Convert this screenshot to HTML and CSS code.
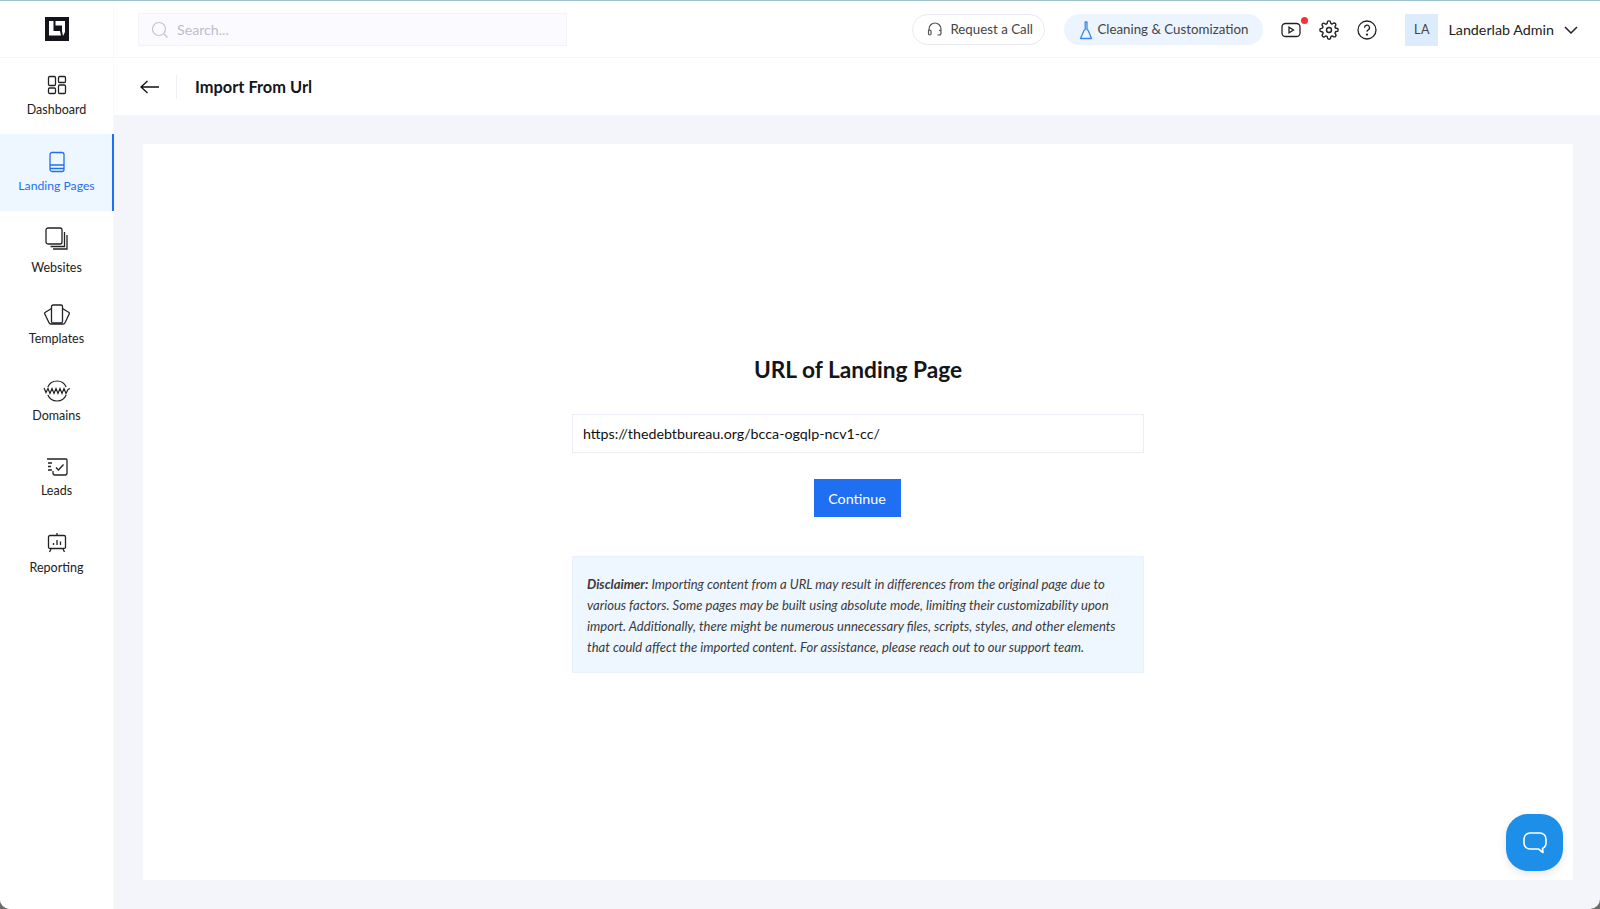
FILE: index.html
```html
<!DOCTYPE html>
<html lang="en">
<head>
    <meta charset="UTF-8">
    <title>Import From Url</title>
    <link rel="stylesheet" href="styles.css">
</head>
<body>
    <div class="app">
        <aside class="sidebar">
            <div class="logo-box">
                <svg width="24" height="24" viewBox="0 0 24 24"><rect width="24" height="24" fill="#14151a"/><path d="M4 4h4.500v10H15l1 4.500H4zM10.500 4H20v11l-2 4-1-5V8.500h-6.500z" fill="#fff"/></svg>
            </div>
            <nav class="nav">
                <a class="nav-item nav-dashboard">
                    <svg width="20" height="20" viewBox="0 0 20 20" fill="none" stroke="#222" stroke-width="1.3"><rect x="1.5" y="1.5" width="7" height="9" rx="1.2"/><rect x="11.5" y="1.5" width="7" height="6" rx="1.2"/><rect x="1.5" y="13" width="7" height="5.5" rx="1.2"/><rect x="11.5" y="10" width="7" height="8.5" rx="1.2"/></svg>
                    <span>Dashboard</span>
                </a>
                <a class="nav-item nav-landing active">
                    <svg width="18" height="22" viewBox="0 0 18 22" fill="none" stroke="#1f6ff2" stroke-width="1.3"><rect x="2" y="1.5" width="14" height="19" rx="2"/><path d="M2 14h14M2 17.5h14"/></svg>
                    <span>Landing Pages</span>
                </a>
                <a class="nav-item nav-websites">
                    <svg width="24" height="24" viewBox="0 0 24 24" fill="none" stroke="#222" stroke-width="1.3"><rect x="1" y="1" width="16" height="16" rx="2"/><path d="M19.5 5v14.500h-14M22 8v14H8"/></svg>
                    <span>Websites</span>
                </a>
                <a class="nav-item nav-templates">
                    <svg width="28" height="22" viewBox="0 0 28 22" fill="none" stroke="#222" stroke-width="1.3" stroke-linejoin="round"><rect x="8.500" y="1" width="11" height="18" rx="1.500"/><path d="M8.500 4.500 2 8.500a1 1 0 0 0-.3 1.300L6 18.800q.6 1.200 1.800 1.200h12.400q1.200 0 1.800-1.200l4.300-9a1 1 0 0 0-.3-1.300l-6.500-4"/></svg>
                    <span>Templates</span>
                </a>
                <a class="nav-item nav-domains">
                    <svg width="28" height="22" viewBox="0 0 28 22" fill="none" stroke="#222" stroke-width="1.2"><path d="M4.830 7a10 10 0 0 1 18.340 0M4.830 15a10 10 0 0 0 18.340 0"/><path d="M1 8l2 4.500 2-4 2 5 2-5 2 5 2-5 2 5 2-5 2 5 2-5 2 5 2-4 2-1"/></svg>
                    <span>Domains</span>
                </a>
                <a class="nav-item nav-leads">
                    <svg width="22" height="18" viewBox="0 0 22 18" fill="none" stroke="#222" stroke-width="1.3"><path d="M1 1h19a1 1 0 0 1 1 1v13a2 2 0 0 1-2 2H9a2 2 0 0 1-2-2v-2"/><path d="M2 5h4M2 8.500h3M2 12h4M10 9.500l2.500 2.500 5-5.500"/></svg>
                    <span>Leads</span>
                </a>
                <a class="nav-item nav-reporting">
                    <svg width="20" height="22" viewBox="0 0 20 22" fill="none" stroke="#222" stroke-width="1.3"><rect x="1.500" y="3.500" width="17" height="13" rx="1.500"/><path d="M10 1v2.500M4 17l-1.500 3M16 17l1.500 3M6.500 13v-2M10 13V8M13.500 13V9.500"/></svg>
                    <span>Reporting</span>
                </a>
            </nav>
        </aside>
        <div class="main">
            <header class="topbar">
                <div class="search">
                    <svg width="18" height="18" viewBox="0 0 18 18" fill="none" stroke="#c3c3d6" stroke-width="1.2"><circle cx="8" cy="8" r="6.500"/><path d="M13 13l3.500 3.500"/></svg>
                    <span>Search...</span>
                </div>
                <div class="top-actions">
                    <a class="pill pill-call">
                        <svg width="16" height="16" viewBox="0 0 16 16" fill="none" stroke="#555" stroke-width="1.200"><path d="M2 9V7a6 6 0 0 1 12 0v2"/><rect x="1.500" y="8" width="2.500" height="5" rx="1.200"/><path d="M12 8.500a1.500 1.500 0 0 1 2 1.500v1a2 2 0 0 1-2 2h-1.500"/></svg>
                        <span>Request a Call</span>
                    </a>
                    <a class="pill pill-clean">
                        <svg width="14" height="20" viewBox="0 0 14 20" fill="none" stroke="#3c86f0" stroke-width="1.300" stroke-linejoin="round"><path d="M6.200 2h1.800v7.500l1.200 1 3.300 8H1.500l3.500-8 1.200-1z"/></svg>
                        <span>Cleaning &amp; Customization</span>
                    </a>
                    <div class="icon-btns">
                        <span class="video-btn">
                            <svg width="20" height="16" viewBox="0 0 20 16" fill="none" stroke="#222" stroke-width="1.300"><rect x="1" y="1.500" width="18" height="13" rx="3.500"/><path d="M8 5.200v5.600l4.500-2.800z"/></svg>
                            <i class="dot"></i>
                        </span>
                        <svg width="20" height="20" viewBox="0 0 24 24" fill="none" stroke="#222" stroke-width="1.700" stroke-linejoin="round"><circle cx="12" cy="12" r="3"/><path d="M19.400 15a1.650 1.650 0 0 0 .33 1.820l.06.06a2 2 0 1 1-2.830 2.830l-.06-.06a1.650 1.650 0 0 0-2.800 1.170V21a2 2 0 1 1-4 0v-.09A1.650 1.650 0 0 0 7.270 19.700l-.06.06a2 2 0 1 1-2.830-2.830l.06-.06a1.650 1.650 0 0 0-1.170-2.800H3a2 2 0 1 1 0-4h.09A1.650 1.650 0 0 0 4.300 7.270l-.06-.06a2 2 0 1 1 2.830-2.830l.06.06a1.650 1.650 0 0 0 2.800-1.170V3a2 2 0 1 1 4 0v.09a1.650 1.650 0 0 0 2.800 1.170l.06-.06a2 2 0 1 1 2.830 2.830l-.06.06a1.650 1.650 0 0 0 1.170 2.800H21a2 2 0 1 1 0 4h-.09a1.650 1.650 0 0 0-1.510 1z"/></svg>
                        <svg width="20" height="20" viewBox="0 0 20 20" fill="none" stroke="#222" stroke-width="1.300"><circle cx="10" cy="10" r="9"/><path d="M7.500 7.700a2.500 2.500 0 1 1 3.700 2.200c-.8.400-1.200 1-1.200 1.800"/><circle cx="10" cy="14.600" r=".5" fill="#222"/></svg>
                    </div>
                    <div class="user">
                        <div class="avatar">LA</div>
                        <span class="user-name">Landerlab Admin</span>
                        <svg width="14" height="8" viewBox="0 0 14 8" fill="none" stroke="#222" stroke-width="1.500"><path d="M1 1l6 6 6-6"/></svg>
                    </div>
                </div>
            </header>
            <div class="titlebar">
                <svg class="back" width="20" height="14" viewBox="0 0 20 14" fill="none" stroke="#111" stroke-width="1.300"><path d="M19 7H1M7.500 1 1 7l6.500 6"/></svg>
                <h1>Import From Url</h1>
            </div>
            <main class="content">
                <section class="card">
                    <div class="import-form">
                        <h2>URL of Landing Page</h2>
                        <input class="url-input" type="text" value="https://thedebtbureau.org/bcca-ogqlp-ncv1-cc/">
                        <button class="continue">Continue</button>
                        <p class="disclaimer"><b>Disclaimer:</b> Importing content from a URL may result in differences from the original page due to various factors. Some pages may be built using absolute mode, limiting their customizability upon import. Additionally, there might be numerous unnecessary files, scripts, styles, and other elements that could affect the imported content. For assistance, please reach out to our support team.</p>
                    </div>
                </section>
            </main>
        </div>
    </div>
    <a class="chat-btn">
        <svg width="26" height="26" viewBox="0 0 26 26" fill="none" stroke="#fff" stroke-width="1.600" stroke-linejoin="round"><path d="M8 3h10a6 6 0 0 1 6 6v4a6 6 0 0 1-3.500 5.500l.5 4-4.500-3.500H8a6 6 0 0 1-6-6V9a6 6 0 0 1 6-6z"/></svg>
    </a>
</body>
</html>
```

FILE: styles.css
```css
* {
    box-sizing: border-box;
}
html, body {
    height: 100%;
}
body {
    margin: 0;
    font-family: Lato, 'Noto Sans', sans-serif;
    color: #14151a;
    background: #6b6b6b;
    overflow: hidden;
}
.app {
    display: flex;
    height: 909px;
    border-top: 1px solid #9fc1c9;
    border-radius: 0 0 10px 10px;
    overflow: hidden;
    background: #f3f5fa;
}
.sidebar {
    width: 114px;
    flex-shrink: 0;
    background: white;
    border-right: 1px solid #f9f9fc;
}
.logo-box {
    height: 57px;
    display: flex;
    align-items: center;
    justify-content: center;
    border-bottom: 1px solid #f5f6fa;
    padding-bottom: 1px;
}
.nav-item {
    display: flex;
    flex-direction: column;
    align-items: center;
    justify-content: flex-end;
    font-size: 12.5px;
    color: #222;
    line-height: 16px;
    gap: 7px;
}
.nav-dashboard {
    height: 60px;
    margin-bottom: 16px;
}
.nav-landing {
    height: 77px;
    padding: 0 0 17px 1px;
    gap: 5px;
    margin-right: -1px;
    font-size: 12.2px;
    color: #1f6ff2;
    background: #eef6ff;
    border-right: 2px solid #1f6ff2;
}
.nav-websites {
    height: 65px;
    gap: 9px;
}
.nav-templates {
    height: 71px;
    gap: 5px;
}
.nav-domains {
    height: 77px;
    gap: 6px;
}
.nav-leads {
    height: 75px;
}
.nav-reporting {
    height: 77px;
    gap: 6px;
}
.main {
    flex: 1;
    display: flex;
    flex-direction: column;
    min-width: 0;
}
.topbar {
    height: 57px;
    background: white;
    border-bottom: 1px solid #f5f6fa;
    display: flex;
    align-items: center;
    justify-content: space-between;
    padding: 1px 22px 0 24px;
}
.search {
    width: 429px;
    height: 33px;
    display: flex;
    align-items: center;
    gap: 8px;
    padding-left: 12px;
    background: #fafaff;
    border: 1px solid #f3f3fc;
    font-size: 14.2px;
    color: #bdbdd0;
}
.search span,
.pill span,
.user-name {
    padding-bottom: 1px;
}
.top-actions {
    display: flex;
    align-items: center;
}
.pill {
    display: flex;
    align-items: center;
    height: 31px;
    border-radius: 16px;
    font-size: 13.3px;
    color: #444;
}
.pill-call {
    width: 133px;
    gap: 7px;
    padding-left: 14px;
    border: 1px solid #e8e8f2;
    margin-right: 19px;
}
.pill-clean {
    width: 199px;
    gap: 4px;
    padding-left: 15px;
    background: #ebf4ff;
    margin-right: 18px;
}
.icon-btns {
    display: flex;
    align-items: center;
    gap: 18px;
    margin-right: 28px;
}
.video-btn {
    position: relative;
    display: flex;
}
.dot {
    position: absolute;
    top: -5px;
    right: -7px;
    width: 7px;
    height: 7px;
    border-radius: 50%;
    background: #fb2d37;
}
.user {
    display: flex;
    align-items: center;
    font-size: 14.3px;
    color: #222;
}
.avatar {
    width: 33px;
    height: 32px;
    margin-right: 10px;
    display: flex;
    align-items: center;
    justify-content: center;
    background: #dcecfd;
    font-size: 12.5px;
    letter-spacing: .5px;
    color: #444;
}
.user-name {
    margin-right: 10px;
}
.titlebar {
    height: 57px;
    background: white;
    display: flex;
    align-items: center;
    padding-left: 26px;
}
.back {
    margin-right: 16px;
}
.titlebar h1 {
    margin: 0;
    padding-left: 18px;
    height: 24px;
    line-height: 24px;
    border-left: 1px solid #eef0f6;
    font-size: 16.4px;
    font-weight: 700;
}
.content {
    flex: 1;
    padding: 29px 27px 29px 29px;
}
.card {
    height: 100%;
    background: white;
    display: flex;
    justify-content: center;
}
.import-form {
    width: 572px;
    padding-top: 210px;
    display: flex;
    flex-direction: column;
    align-items: center;
}
.import-form h2 {
    margin: 0 0 28px;
    font-size: 22.7px;
    line-height: 32px;
    font-weight: 700;
}
.url-input {
    width: 100%;
    height: 39px;
    padding: 0 10px;
    border: 1px solid #eceef6;
    font-family: inherit;
    font-size: 14.25px;
    color: #111;
}
.continue {
    margin: 26px 2px 0 0;
    width: 87px;
    height: 38px;
    border: none;
    background: #1f6ff2;
    color: white;
    font-family: inherit;
    font-size: 14.3px;
}
.disclaimer {
    width: 100%;
    margin: 39px 0 0;
    padding: 17px 14px 14px;
    background: #eef6ff;
    border: 1px solid #e9f1fb;
    font-size: 13.06px;
    line-height: 21px;
    font-style: italic;
    color: #3a3a3a;
}
.chat-btn {
    position: absolute;
    left: 1506px;
    top: 814px;
    width: 57px;
    height: 57px;
    border-radius: 22px;
    background: #1e8fe8;
    box-shadow: 0 3px 8px rgba(0,0,0,.1);
    display: flex;
    align-items: center;
    justify-content: center;
}
```
